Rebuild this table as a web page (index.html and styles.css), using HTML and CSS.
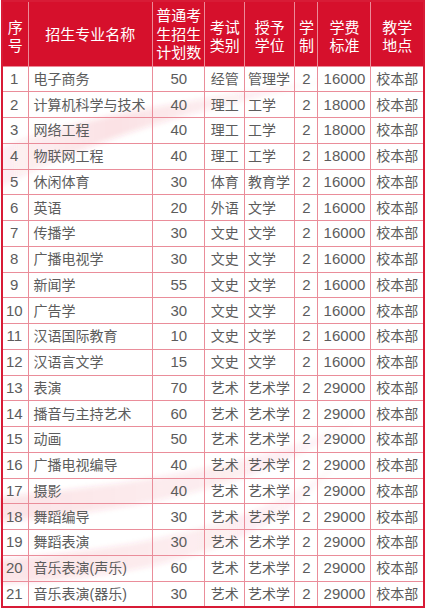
FILE: index.html
```html
<!DOCTYPE html>
<html lang="zh">
<head>
<meta charset="utf-8">
<link rel="stylesheet" href="styles.css">
</head>
<body>
<div class="page">
  <svg class="deco" width="427" height="612" viewBox="0 0 427 612" aria-hidden="true">
    <defs>
      <linearGradient id="g1" x1="0" y1="0" x2="1" y2="0">
        <stop offset="0" stop-color="#e0304a" stop-opacity="0.06"/>
        <stop offset="0.35" stop-color="#e0304a" stop-opacity="0.14"/>
        <stop offset="1" stop-color="#e0304a" stop-opacity="0.03"/>
      </linearGradient>
      <linearGradient id="g2" x1="0" y1="0" x2="1" y2="0">
        <stop offset="0" stop-color="#e0304a" stop-opacity="0.13"/>
        <stop offset="0.6" stop-color="#e0304a" stop-opacity="0.09"/>
        <stop offset="1" stop-color="#e0304a" stop-opacity="0.03"/>
      </linearGradient>
      <filter id="soft" x="-10%" y="-10%" width="120%" height="120%">
        <feGaussianBlur stdDeviation="2.5"/>
      </filter>
    </defs>
    <g filter="url(#soft)">
      <path d="M-5,150 C70,118 190,100 330,80 C230,104 110,128 -5,190 Z" fill="url(#g1)"/>
      <path d="M-5,498 C100,486 230,476 355,422 C250,495 110,512 -5,522 Z" fill="url(#g2)"/>
      <path d="M-5,560 C110,550 240,536 335,466 C260,560 120,578 -5,584 Z" fill="url(#g2)"/>
    </g>
  </svg>
  <table class="plan">
    <colgroup>
      <col class="c1"><col class="c2"><col class="c3"><col class="c4"><col class="c5"><col class="c6"><col class="c7"><col class="c8">
    </colgroup>
    <thead>
      <tr>
        <th class="low">序<br>号</th>
        <th>招生专业名称</th>
        <th>普通考<br>生招生<br>计划数</th>
        <th class="low">考试<br>类别</th>
        <th class="low">授予<br>学位</th>
        <th class="low">学<br>制</th>
        <th class="low">学费<br>标准</th>
        <th class="low">教学<br>地点</th>
      </tr>
    </thead>
    <tbody>
      <tr><td class="n">1</td><td class="name">电子商务</td><td class="c num">50</td><td class="c">经管</td><td class="deg">管理学</td><td class="c num">2</td><td class="c num">16000</td><td class="c">校本部</td></tr>
      <tr><td class="n">2</td><td class="name">计算机科学与技术</td><td class="c num">40</td><td class="c">理工</td><td class="deg">工学</td><td class="c num">2</td><td class="c num">18000</td><td class="c">校本部</td></tr>
      <tr><td class="n">3</td><td class="name">网络工程</td><td class="c num">40</td><td class="c">理工</td><td class="deg">工学</td><td class="c num">2</td><td class="c num">18000</td><td class="c">校本部</td></tr>
      <tr><td class="n">4</td><td class="name">物联网工程</td><td class="c num">40</td><td class="c">理工</td><td class="deg">工学</td><td class="c num">2</td><td class="c num">18000</td><td class="c">校本部</td></tr>
      <tr><td class="n">5</td><td class="name">休闲体育</td><td class="c num">30</td><td class="c">体育</td><td class="deg">教育学</td><td class="c num">2</td><td class="c num">16000</td><td class="c">校本部</td></tr>
      <tr><td class="n">6</td><td class="name">英语</td><td class="c num">20</td><td class="c">外语</td><td class="deg">文学</td><td class="c num">2</td><td class="c num">16000</td><td class="c">校本部</td></tr>
      <tr><td class="n">7</td><td class="name">传播学</td><td class="c num">30</td><td class="c">文史</td><td class="deg">文学</td><td class="c num">2</td><td class="c num">16000</td><td class="c">校本部</td></tr>
      <tr><td class="n">8</td><td class="name">广播电视学</td><td class="c num">30</td><td class="c">文史</td><td class="deg">文学</td><td class="c num">2</td><td class="c num">16000</td><td class="c">校本部</td></tr>
      <tr><td class="n">9</td><td class="name">新闻学</td><td class="c num">55</td><td class="c">文史</td><td class="deg">文学</td><td class="c num">2</td><td class="c num">16000</td><td class="c">校本部</td></tr>
      <tr><td class="n">10</td><td class="name">广告学</td><td class="c num">30</td><td class="c">文史</td><td class="deg">文学</td><td class="c num">2</td><td class="c num">16000</td><td class="c">校本部</td></tr>
      <tr><td class="n">11</td><td class="name">汉语国际教育</td><td class="c num">10</td><td class="c">文史</td><td class="deg">文学</td><td class="c num">2</td><td class="c num">16000</td><td class="c">校本部</td></tr>
      <tr><td class="n">12</td><td class="name">汉语言文学</td><td class="c num">15</td><td class="c">文史</td><td class="deg">文学</td><td class="c num">2</td><td class="c num">16000</td><td class="c">校本部</td></tr>
      <tr><td class="n">13</td><td class="name">表演</td><td class="c num">70</td><td class="c">艺术</td><td class="deg">艺术学</td><td class="c num">2</td><td class="c num">29000</td><td class="c">校本部</td></tr>
      <tr><td class="n">14</td><td class="name">播音与主持艺术</td><td class="c num">60</td><td class="c">艺术</td><td class="deg">艺术学</td><td class="c num">2</td><td class="c num">29000</td><td class="c">校本部</td></tr>
      <tr><td class="n">15</td><td class="name">动画</td><td class="c num">50</td><td class="c">艺术</td><td class="deg">艺术学</td><td class="c num">2</td><td class="c num">29000</td><td class="c">校本部</td></tr>
      <tr><td class="n">16</td><td class="name">广播电视编导</td><td class="c num">40</td><td class="c">艺术</td><td class="deg">艺术学</td><td class="c num">2</td><td class="c num">29000</td><td class="c">校本部</td></tr>
      <tr><td class="n">17</td><td class="name">摄影</td><td class="c num">40</td><td class="c">艺术</td><td class="deg">艺术学</td><td class="c num">2</td><td class="c num">29000</td><td class="c">校本部</td></tr>
      <tr><td class="n">18</td><td class="name">舞蹈编导</td><td class="c num">30</td><td class="c">艺术</td><td class="deg">艺术学</td><td class="c num">2</td><td class="c num">29000</td><td class="c">校本部</td></tr>
      <tr><td class="n">19</td><td class="name">舞蹈表演</td><td class="c num">30</td><td class="c">艺术</td><td class="deg">艺术学</td><td class="c num">2</td><td class="c num">29000</td><td class="c">校本部</td></tr>
      <tr><td class="n">20</td><td class="name">音乐表演(声乐)</td><td class="c num">60</td><td class="c">艺术</td><td class="deg">艺术学</td><td class="c num">2</td><td class="c num">29000</td><td class="c">校本部</td></tr>
      <tr><td class="n">21</td><td class="name">音乐表演(器乐)</td><td class="c num">30</td><td class="c">艺术</td><td class="deg">艺术学</td><td class="c num">2</td><td class="c num">29000</td><td class="c">校本部</td></tr>
    </tbody>
  </table>
</div>
</body>
</html>
```

FILE: styles.css
```css
html, body {
  margin: 0;
  padding: 0;
  background: #ffffff;
}

.page {
  position: relative;
  width: 427px;
  height: 612px;
  padding: 0 0 0 1px;
  box-sizing: border-box;
  overflow: hidden;
}

.deco {
  position: absolute;
  left: 0;
  top: 0;
  z-index: 0;
}

.plan {
  position: relative;
  z-index: 1;
  border-collapse: collapse;
  table-layout: fixed;
  width: 424px;
  font-family: "Liberation Sans", "Noto Sans CJK SC", sans-serif;
  font-size: 14px;
  color: #5c5c5c;
  border: 2px solid #d81b36;
}

.c1 { width: 26px; }
.c2 { width: 124.6px; }
.c3 { width: 52.4px; }
.c4 { width: 39.6px; }
.c5 { width: 50.4px; }
.c6 { width: 23px; }
.c7 { width: 53px; }
.c8 { width: 53.3px; }

.plan thead tr {
  height: 65px;
}

.plan th {
  background: #d6102c;
  color: #ffffff;
  font-weight: normal;
  font-size: 15px;
  line-height: 18.3px;
  padding: 0;
  text-align: center;
  vertical-align: middle;
  border: 1px solid #ec8a98;
  border-top: 2px solid #d81b36;
  font-family: "Noto Sans CJK SC", sans-serif;
}

.plan th.low {
  padding-top: 5px;
}

.plan tbody tr {
  height: 25.75px;
}

.plan td {
  padding: 0;
  line-height: 14px;
  border: 1px solid #ea8d9a;
  white-space: nowrap;
  overflow: hidden;
  vertical-align: middle;
}

.plan td.c,
.plan td.n {
  text-align: center;
}

.plan td.n {
  padding-right: 2px;
  font-size: 15px;
}

.plan td.num {
  font-size: 15px;
}

.plan td.name {
  padding-left: 5px;
}

.plan td.deg {
  padding-left: 3px;
}
```
